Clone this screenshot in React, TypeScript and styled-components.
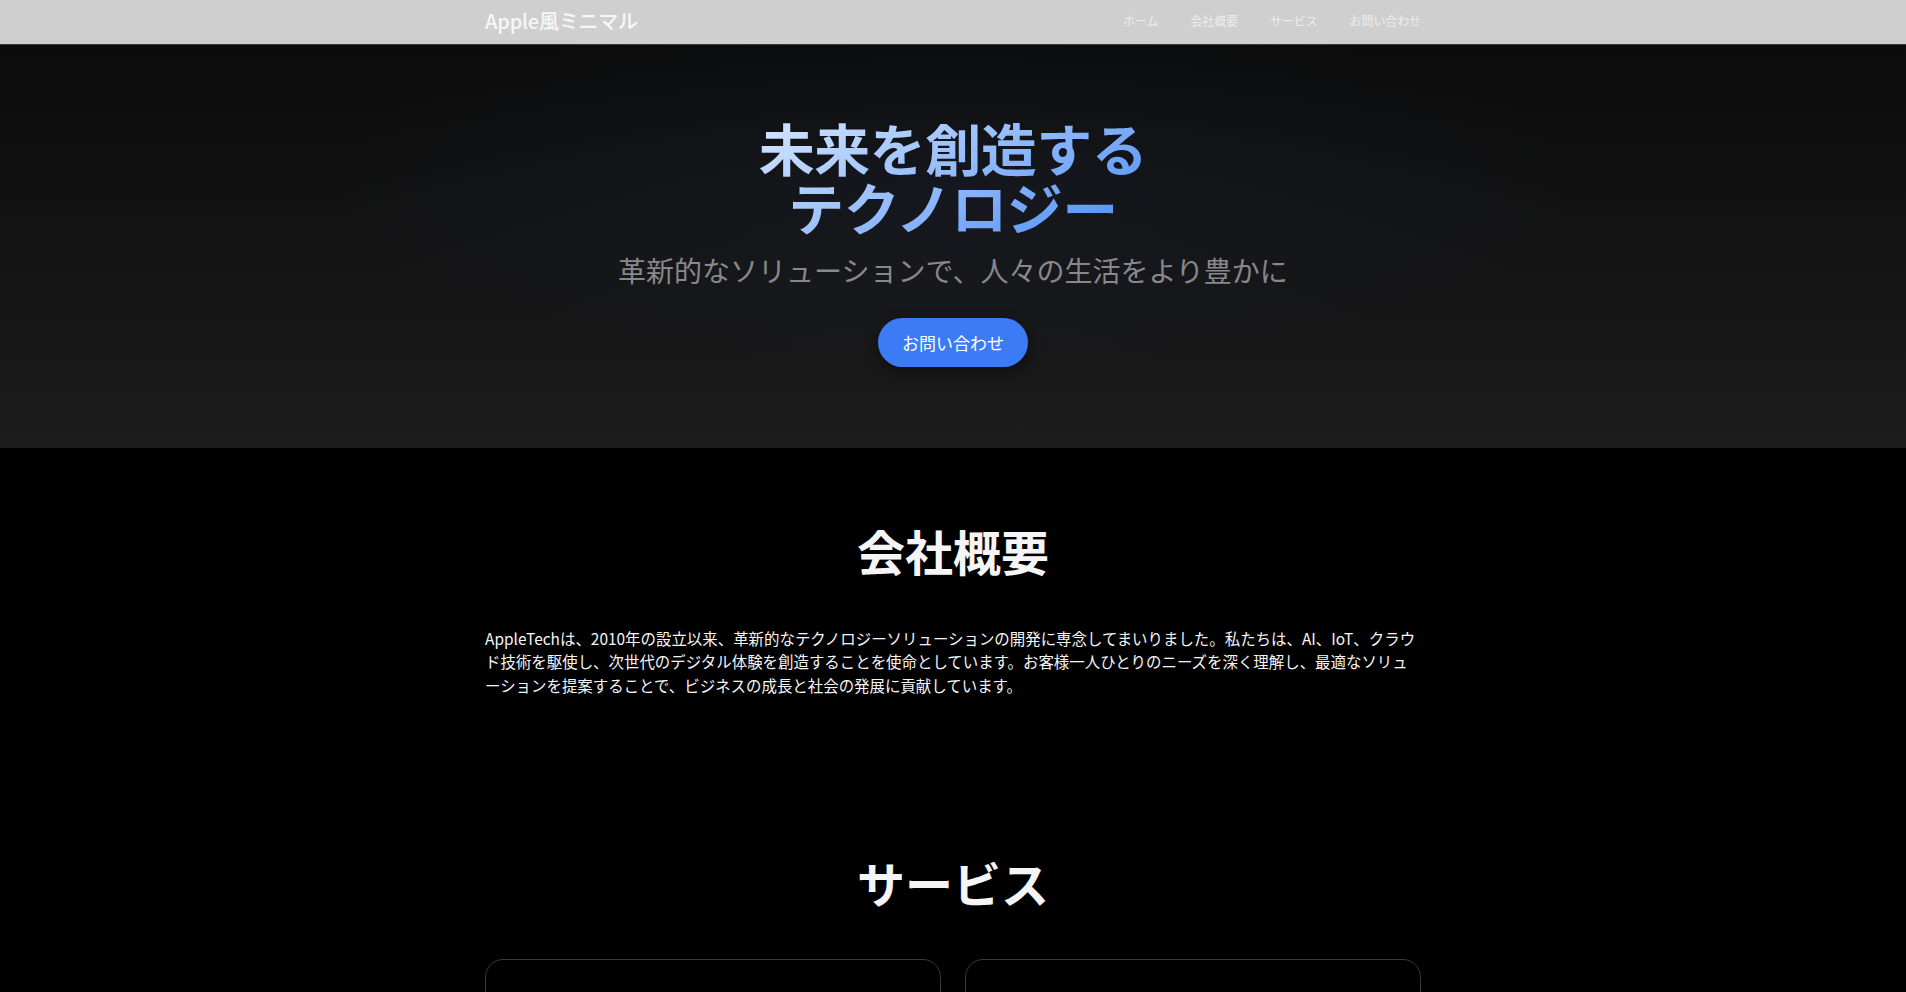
import React from "react";
import styled, { createGlobalStyle } from "styled-components";

const GlobalStyle = createGlobalStyle`
  html { scrollbar-width: none; }
  html::-webkit-scrollbar { display: none; }
  body {
    margin: 0;
    background: #000;
    color: #f5f5f7;
    font-family: "Noto Sans CJK JP", "Noto Sans", sans-serif;
    -webkit-font-smoothing: antialiased;
  }
  * { box-sizing: border-box; }
`;

const Nav = styled.header`
  height: 45px;
  background: #cfcfcf;
  border-bottom: 1px solid #3a3a3a;
`;

const Container = styled.div`
  max-width: 980px;
  margin: 0 auto;
  padding: 0 22px;
`;

const NavInner = styled(Container)`
  height: 44px;
  display: flex;
  align-items: center;
  justify-content: space-between;
  padding-bottom: 2px;
`;

const Logo = styled.a`
  font-size: 20px;
  font-weight: 500;
  line-height: 1;
  color: #f7f7f7;
  text-decoration: none;
  letter-spacing: -0.2px;
`;

const NavLinks = styled.nav`
  display: flex;
  gap: 32px;
`;

const NavLink = styled.a`
  font-size: 12px;
  line-height: 1;
  color: #ededed;
  text-decoration: none;
  letter-spacing: -0.1px;
`;

const Hero = styled.section`
  height: 403px;
  background:
    radial-gradient(ellipse 900px 260px at 50% 35%, rgba(70, 110, 200, 0.07), transparent 70%),
    linear-gradient(180deg, #0b0b0b 0%, #1c1c1d 100%);
  display: flex;
  flex-direction: column;
  align-items: center;
  padding-top: 73px;
  text-align: center;
`;

const Title = styled.h1`
  margin: 0;
  font-size: 56px;
  font-weight: 700;
  line-height: 1.05;
  letter-spacing: -0.5px;
  background: linear-gradient(150deg, #d6e6ff 0%, #9fc3fb 40%, #4a8bf5 100%);
  -webkit-background-clip: text;
  background-clip: text;
  color: transparent;
  display: inline-block;
`;

const Subtitle = styled.p`
  margin: 18px 0 0;
  font-size: 28px;
  font-weight: 400;
  line-height: 1.2;
  color: #88888c;
`;

const CTA = styled.a`
  margin-top: 31px;
  height: 49px;
  padding: 0 24px;
  display: inline-flex;
  align-items: center;
  border-radius: 999px;
  background: #3c7bf6;
  color: #fff;
  font-size: 17px;
  text-decoration: none;
  box-shadow: 0 4px 14px rgba(0, 0, 0, 0.45);
`;

const Section = styled.section<{ $top?: number; $bottom?: number }>`
  padding: ${(p) => p.$top ?? 80}px 0 ${(p) => p.$bottom ?? 80}px;
  background: #000;
`;

const SectionTitle = styled.h2<{ $gap?: number }>`
  margin: 0 0 ${(p) => p.$gap ?? 45}px;
  text-align: center;
  font-size: 48px;
  font-weight: 700;
  line-height: 1.1;
  color: #f5f5f7;
`;

const Body = styled.p`
  margin: 0;
  font-size: 15.45px;
  line-height: 23.5px;
  color: #f5f5f7;
`;

const Cards = styled.div`
  display: grid;
  grid-template-columns: 1fr 1fr;
  gap: 24px;
  margin-top: 50px;
`;

const Card = styled.div`
  border: 1px solid #3a3a3a;
  border-radius: 18px;
  padding: 48px 40px 40px;
  min-height: 220px;
  background: #000;
`;

const CardTitle = styled.h3`
  margin: 0 0 12px;
  font-size: 24px;
  font-weight: 600;
`;

const CardText = styled.p`
  margin: 0;
  font-size: 16px;
  line-height: 1.5;
  color: #a1a1a6;
`;

export default function App() {
  return (
    <>
      <GlobalStyle />
      <Nav>
        <NavInner>
          <Logo href="#">Apple風ミニマル</Logo>
          <NavLinks>
            <NavLink href="#">ホーム</NavLink>
            <NavLink href="#">会社概要</NavLink>
            <NavLink href="#">サービス</NavLink>
            <NavLink href="#">お問い合わせ</NavLink>
          </NavLinks>
        </NavInner>
      </Nav>
      <Hero>
        <Title>
          未来を創造する
          <br />
          テクノロジー
        </Title>
        <Subtitle>革新的なソリューションで、人々の生活をより豊かに</Subtitle>
        <CTA href="#">お問い合わせ</CTA>
      </Hero>
      <Section $top={76} $bottom={79}>
        <Container>
          <SectionTitle $gap={50}>会社概要</SectionTitle>
          <Body>
            AppleTechは、2010年の設立以来、革新的なテクノロジーソリューションの開発に専念してまいりました。私たちは、AI、IoT、クラウド技術を駆使し、次世代のデジタル体験を創造することを使命としています。お客様一人ひとりのニーズを深く理解し、最適なソリューションを提案することで、ビジネスの成長と社会の発展に貢献しています。
          </Body>
        </Container>
      </Section>
      <Section>
        <Container>
          <SectionTitle>サービス</SectionTitle>
          <Cards>
            <Card>
              <CardTitle>AIソリューション</CardTitle>
              <CardText>最先端のAI技術でビジネスを変革します。</CardText>
            </Card>
            <Card>
              <CardTitle>クラウドサービス</CardTitle>
              <CardText>安全で拡張性の高いクラウド基盤を提供します。</CardText>
            </Card>
          </Cards>
        </Container>
      </Section>
    </>
  );
}
